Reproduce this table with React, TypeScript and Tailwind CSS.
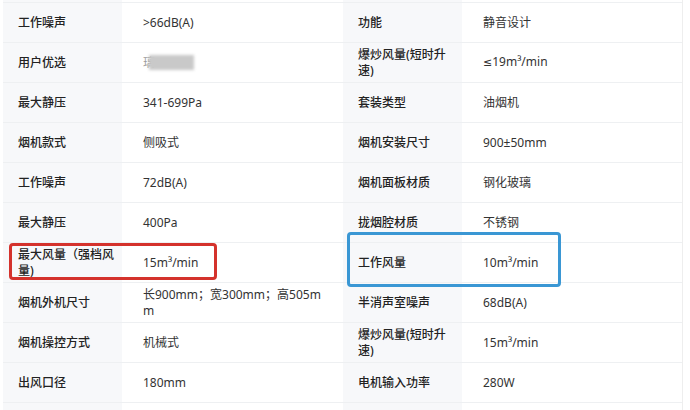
import React from "react";

type Row = { l1: string; v1: React.ReactNode; l2: string; v2: React.ReactNode };

const rows: Row[] = [
  { l1: "工作噪声", v1: ">66dB(A)", l2: "功能", v2: "静音设计" },
  {
    l1: "用户优选",
    v1: (
      <span className="flex items-center">
        <span className="text-[#999]">璃</span>
        <span className="-ml-[6px] h-[15px] w-[45px] bg-[#c9c9c9] blur-[1.5px]" />
      </span>
    ),
    l2: "爆炒风量(短时升速)",
    v2: (
      <span>
        <span className="font-['DejaVu_Sans'] text-[11px]">≤</span>19m³/min
      </span>
    ),
  },
  { l1: "最大静压", v1: "341-699Pa", l2: "套装类型", v2: "油烟机" },
  { l1: "烟机款式", v1: "侧吸式", l2: "烟机安装尺寸", v2: "900±50mm" },
  { l1: "工作噪声", v1: "72dB(A)", l2: "烟机面板材质", v2: "钢化玻璃" },
  { l1: "最大静压", v1: "400Pa", l2: "拢烟腔材质", v2: "不锈钢" },
  { l1: "最大风量（强档风量)", v1: "15m³/min", l2: "工作风量", v2: "10m³/min" },
  { l1: "烟机外机尺寸", v1: "长900mm；宽300mm；高505mm", l2: "半消声室噪声", v2: "68dB(A)" },
  { l1: "烟机操控方式", v1: "机械式", l2: "爆炒风量(短时升速)", v2: "15m³/min" },
  { l1: "出风口径", v1: "180mm", l2: "电机输入功率", v2: "280W" },
];

const labelCls =
  "h-10 flex items-center bg-[#f7f8fa] border-b border-[#eef0f2] pl-[15px] pr-[7px] font-medium text-[#222] leading-[16px] break-all";
const valueCls =
  "h-10 flex items-center bg-white border-b border-[#eef0f2] pl-[21px] pr-[17px] text-[#333] leading-[16px] break-all";

export default function App() {
  return (
    <div
      className="relative w-[690px] h-[410px] overflow-hidden bg-white text-[12px]"
      style={{ fontFamily: '"Noto Sans", "Noto Sans CJK SC", sans-serif' }}
    >
      <div className="ml-[3px] w-[679px] grid grid-cols-[119px_221px_119px_220px]">
        <div className="h-[3px] bg-[#f7f8fa] border-b border-[#eef0f2]" />
        <div className="h-[3px] bg-white border-b border-[#eef0f2]" />
        <div className="h-[3px] bg-[#f7f8fa] border-b border-[#eef0f2]" />
        <div className="h-[3px] bg-white border-b border-[#eef0f2]" />
        {rows.map((r, i) => (
          <React.Fragment key={i}>
            <div className={labelCls}>{r.l1}</div>
            <div className={valueCls}>{r.v1}</div>
            <div className={labelCls}>{r.l2}</div>
            <div className={valueCls}>{r.v2}</div>
          </React.Fragment>
        ))}
        <div className="h-10 bg-[#f7f8fa]" />
        <div className="h-10 bg-white" />
        <div className="h-10 bg-[#f7f8fa]" />
        <div className="h-10 bg-white" />
      </div>
      <div className="absolute right-[4px] top-0 h-full w-[4px] border-l border-[#eeeeee] bg-white" />
      <div className="absolute left-[9px] top-[243px] w-[208px] h-[37px] border-[3px] border-[#d4322c] rounded-[4px]" />
      <div className="absolute left-[347px] top-[232px] w-[214px] h-[55px] border-[3px] border-[#3a97d4] rounded-[4px]" />
    </div>
  );
}
